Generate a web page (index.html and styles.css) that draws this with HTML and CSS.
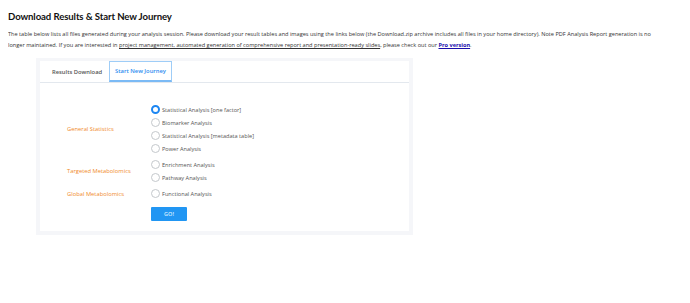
FILE: index.html
```html
<!DOCTYPE html>
<html>
<head>
<meta charset="utf-8">
<link rel="stylesheet" href="styles.css">
</head>
<body>
<h2 class="title">Download Results &amp; Start New Journey</h2>
<p class="intro">The table below lists all files generated during your analysis session. Please download your result tables and images using the links below (the Download.zip archive includes all files in your home directory). Note PDF Analysis Report generation is no<br>longer maintained. If you are interested in <u>project management, automated generation of comprehensive report and presentation-ready slides</u>, please check out our <a class="pro" href="#">Pro version</a>.</p>

<div class="card">
  <div class="panel">
    <div class="tabs">
      <div class="tab">Results Download</div>
      <div class="tab active">Start New Journey</div>
    </div>
    <div class="body">
      <div class="group">
        <div class="label">General Statistics</div>
        <div class="options">
          <div class="opt"><span class="radio on"></span>Statistical Analysis [one factor]</div>
          <div class="opt"><span class="radio"></span>Biomarker Analysis</div>
          <div class="opt"><span class="radio"></span>Statistical Analysis [metadata table]</div>
          <div class="opt"><span class="radio"></span>Power Analysis</div>
        </div>
      </div>
      <div class="group">
        <div class="label">Targeted Metabolomics</div>
        <div class="options">
          <div class="opt"><span class="radio"></span>Enrichment Analysis</div>
          <div class="opt"><span class="radio"></span>Pathway Analysis</div>
        </div>
      </div>
      <div class="group">
        <div class="label">Global Metabolomics</div>
        <div class="options">
          <div class="opt"><span class="radio"></span>Functional Analysis</div>
        </div>
      </div>
      <div class="actions">
        <button class="go">GO!</button>
      </div>
    </div>
  </div>
</div>
</body>
</html>
```

FILE: styles.css
```css
body {
  margin: 8px;
  font-family: "Open Sans", "Noto Sans", sans-serif;
  color: #333;
  background: #fff;
}
.title {
  margin: 2px 0 0 0;
  font-family: Lato, "Open Sans", sans-serif;
  font-size: 9.6px;
  font-weight: 700;
  line-height: 14px;
  letter-spacing: -0.1px;
  color: #111;
}
.intro {
  margin: 5px 0 0 0;
  font-size: 5.6px;
  line-height: 11px;
  color: #333;
}
.intro u {
  text-decoration: underline;
}
.pro {
  color: #1a0dab;
  font-weight: 700;
  text-decoration: underline;
}
.card {
  margin: 7px 0 0 28px;
  width: 369px;
  padding: 3px 4px 4px 4px;
  background: #f5f6f9;
}
.panel {
  background: #fff;
}
.tabs {
  display: flex;
  height: 21px;
  padding-left: 6px;
  border-bottom: 1px solid #e3e8ee;
  align-items: stretch;
}
.tab {
  display: flex;
  align-items: center;
  padding: 0 6px;
  font-size: 5.8px;
  font-weight: 600;
  color: #555;
}
.tab.active {
  margin-left: 1px;
  color: #2d8cf0;
  border: 1px solid #9fcdf7;
  border-bottom: 2px solid #7bbaf5;
  padding: 0 5px;
}
.body {
  padding: 20px 0 10px 27px;
}
.group {
  display: flex;
  align-items: center;
  margin-bottom: 3px;
}
.group:last-of-type {
  margin-bottom: 1px;
}
.label {
  width: 84px;
  font-size: 5.8px;
  color: #f08a2a;
}
.options {
  display: flex;
  flex-direction: column;
}
.opt {
  display: flex;
  align-items: center;
  height: 13px;
  font-size: 5.6px;
  color: #555;
}
.radio {
  box-sizing: border-box;
  width: 9px;
  height: 9px;
  border-radius: 50%;
  border: 1px solid #c4c8cc;
  margin-right: 2px;
  background: #fff;
}
.radio.on {
  border: 2px solid #1c86f2;
}
.actions {
  display: flex;
  padding: 4px 0 0 84px;
}
.go {
  width: 36px;
  height: 14px;
  border: none;
  border-radius: 1px;
  background: #2196f3;
  color: #dcefff;
  font-family: "Open Sans", sans-serif;
  font-size: 5.5px;
  font-weight: 600;
  padding: 0;
}
```
